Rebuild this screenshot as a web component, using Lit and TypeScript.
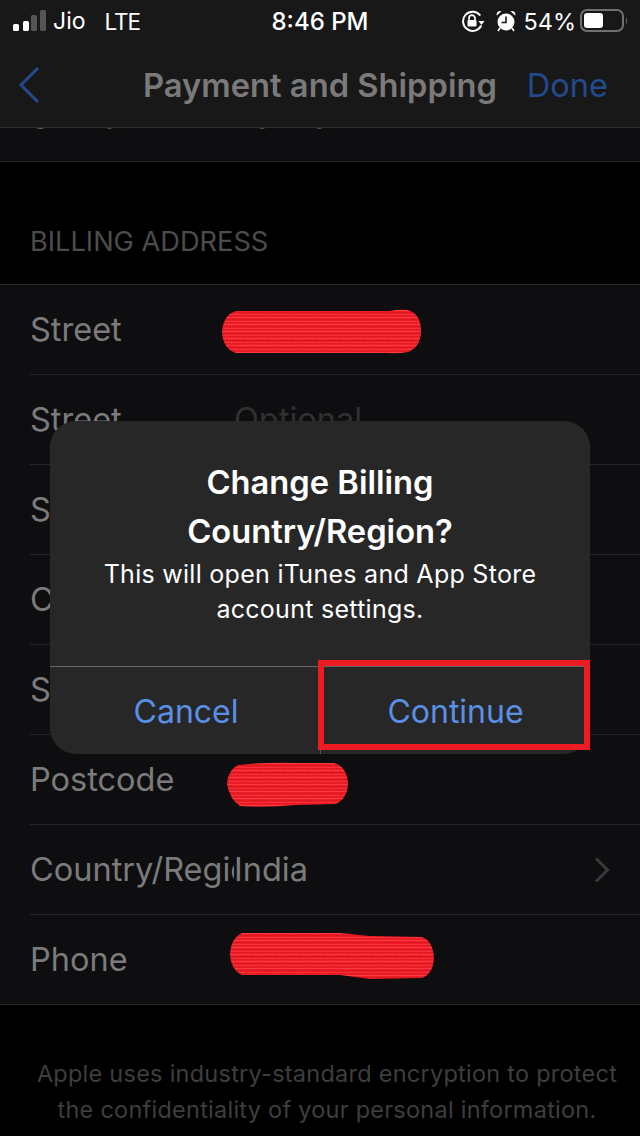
import { LitElement, html, css, svg } from 'lit'
import { customElement } from 'lit/decorators.js'

interface Scribble {
  left: number
  top: number
  width: number
  height: number
  d: string
}

interface Row {
  label: string
  value?: string
  muted?: boolean
  chevron?: boolean
  scribble?: Scribble
}

const ROWS: Row[] = [
  {
    label: 'Street',
    scribble: {
      left: 222, top: 24, width: 200, height: 46,
      d: 'M14 2 H168 Q176 0 186 1 Q199 5 199 22 Q199 38 186 43 Q176 45 166 44 H14 Q1 40 0 23 Q1 6 14 2 Z',
    },
  },
  { label: 'Street', value: 'Optional', muted: true },
  { label: 'Suburb' },
  { label: 'City' },
  { label: 'State' },
  {
    label: 'Postcode',
    scribble: {
      left: 226, top: 27, width: 124, height: 47,
      d: 'M12 3 Q40 0 70 1 L108 1 Q120 4 122 20 Q122 36 110 42 L70 43 Q40 46 14 44 Q4 38 1 22 Q2 8 12 3 Z',
    },
  },
  { label: 'Country/Region', value: 'India', chevron: true },
  {
    label: 'Phone',
    scribble: {
      left: 230, top: 17, width: 206, height: 48,
      d: 'M12 1 H110 L140 4 L192 5 Q203 9 204 26 Q203 42 192 46 L140 47 L110 43 H12 Q1 38 0 22 Q1 6 12 1 Z',
    },
  },
]

@customElement('app-root')
export class AppRoot extends LitElement {
  static styles = css`
    :host {
      display: block;
      position: relative;
      width: 640px;
      height: 1136px;
      overflow: hidden;
      background: #000;
      font-family: Inter, 'Liberation Sans', sans-serif;
    }

    .header {
      position: relative;
      z-index: 1;
      height: 128px;
      box-sizing: border-box;
      background: #181818;
      border-bottom: 1px solid #2c2c2c;
    }

    /* Status bar */
    .status {
      display: grid;
      grid-template-columns: 1fr auto 1fr;
      align-items: center;
      height: 42px;
      padding: 0 11px;
      color: #fff;
      font-size: 24px;
    }

    .status-left,
    .status-right {
      display: flex;
      align-items: center;
    }

    .status-left {
      padding-left: 2px;
    }

    .status-right {
      justify-content: flex-end;
    }

    .time {
      font-weight: 500;
    }

    .carrier {
      margin-left: 7px;
      font-size: 23px;
    }

    .network {
      margin-left: 19px;
      font-size: 22.5px;
      letter-spacing: -1px;
    }

    .percent {
      margin: 0 4px 0 7px;
      font-size: 23.5px;
    }

    .alarm {
      margin-left: 11px;
    }

    /* Navigation bar */
    .nav {
      display: grid;
      grid-template-columns: 1fr auto 1fr;
      align-items: center;
      height: 85px;
      padding: 0 18px;
    }

    .nav-title {
      color: #7a7a7a;
      font-size: 32.7px;
      font-weight: 600;
    }

    .nav-done {
      justify-self: end;
      margin-right: 14px;
      color: #234a8c;
      font-size: 32.6px;
    }

    /* Page behind the dialog */
    .scroll {
      height: 1008px;
      overflow: hidden;
    }

    .content {
      margin-top: -56px;
    }

    .group {
      background: #0e0e10;
      border-top: 1px solid #2a2a2c;
      border-bottom: 1px solid #2a2a2c;
    }

    .group.first {
      border-top: none;
    }

    .group.first .row {
      padding-bottom: 1px;
      height: 88px;
    }

    .row {
      position: relative;
      display: flex;
      align-items: center;
      height: 89px;
      margin-left: 30px;
      padding-right: 30px;
      font-size: 32.5px;
      color: #7b7b7b;
    }

    .row + .row {
      border-top: 1px solid #252527;
    }

    .label {
      flex: none;
      width: 204px;
      overflow: hidden;
      white-space: nowrap;
    }

    .value {
      flex: 1;
    }

    .value.muted {
      color: #303032;
    }

    .scribble {
      position: absolute;
    }

    .section-title {
      padding: 65px 30px 27px;
      color: #4c4c4c;
      font-size: 27.2px;
      line-height: 30px;
    }

    .footer {
      padding: 51px 20px 0 34px;
      color: #3e3e3e;
      font-size: 23.5px;
      line-height: 36px;
      letter-spacing: 0.25px;
      text-align: center;
    }

    /* Alert */
    .dialog {
      position: absolute;
      z-index: 2;
      left: 50px;
      top: 421px;
      width: 540px;
      height: 333px;
      display: flex;
      flex-direction: column;
      background: #272728;
      border-radius: 26px;
      color: #fff;
      text-align: center;
    }

    .dialog-text {
      flex: 1;
      padding: 37px 40px 0;
    }

    .dialog-title {
      font-size: 32.7px;
      font-weight: 600;
      line-height: 49px;
    }

    .dialog-body {
      margin-top: 1px;
      font-size: 25px;
      line-height: 35px;
      letter-spacing: 0.28px;
    }

    .actions {
      display: grid;
      grid-template-columns: 270px 270px;
      height: 87px;
      border-top: 1px solid #666;
    }

    .action {
      display: flex;
      align-items: center;
      justify-content: center;
      padding-top: 1px;
      color: #5b8fe6;
      font-size: 32px;
    }

    .action:first-child {
      padding-left: 2px;
    }

    .action + .action {
      border-left: 1px solid #555;
    }

    .highlight {
      position: absolute;
      left: 268px;
      top: 239px;
      width: 272px;
      height: 90px;
      box-sizing: border-box;
      border: 6px solid #ed1c24;
    }
  `

  private renderStatus() {
    return html`
      <div class="status">
        <div class="status-left">
          <svg width="33" height="22" viewBox="0 0 33 22">
            <rect x="0" y="14" width="6" height="7" rx="1.5" fill="#fff" />
            <rect x="10" y="11" width="6" height="10" rx="1.5" fill="#fff" />
            <rect x="18" y="5" width="6" height="16" rx="1.5" fill="#555" />
            <rect x="27" y="0" width="6" height="21" rx="1.5" fill="#555" />
          </svg>
          <span class="carrier">Jio</span>
          <span class="network">LTE</span>
        </div>
        <div class="time">8:46 PM</div>
        <div class="status-right">
          <svg width="24" height="22" viewBox="0 0 24 22">
            <path d="M19.3 5.5 A9.6 9.6 0 1 0 20.3 15.5" fill="none" stroke="#fff" stroke-width="2" />
            <path d="M17.5 11 H23.5 L20.5 15 Z" fill="#fff" />
            <path d="M8 10 V8.2 A3 3 0 0 1 14 8.2 V10" fill="none" stroke="#fff" stroke-width="1.7" />
            <rect x="6.5" y="10" width="9" height="6.5" rx="1" fill="#fff" />
          </svg>
          <svg class="alarm" width="20" height="22" viewBox="0 0 20 22">
            <circle cx="10" cy="12" r="8.5" fill="#fff" />
            <path d="M10 6.5 V12.5 H5.5" fill="none" stroke="#181818" stroke-width="1.6" />
            <path d="M0.8 5.5 A3.5 3.5 0 0 1 5.5 1.2 Z M19.2 5.5 A3.5 3.5 0 0 0 14.5 1.2 Z" fill="#fff" />
            <path d="M4 18 L2 21 M16 18 L18 21" stroke="#fff" stroke-width="1.6" />
          </svg>
          <span class="percent">54%</span>
          <svg width="49" height="24" viewBox="0 0 49 24">
            <rect x="1" y="1" width="42" height="21" rx="6" fill="none" stroke="#707070" stroke-width="2" />
            <rect x="4" y="4" width="19" height="15" rx="3" fill="#fff" />
            <path d="M46 8 Q48 11.5 46 16 Z" fill="#707070" />
          </svg>
        </div>
      </div>
    `
  }

  private renderScribble(s: Scribble, index: number) {
    const id = `scribble-${index}`
    return html`
      <svg
        class="scribble"
        style="left:${s.left - 30}px;top:${s.top}px"
        width=${s.width}
        height=${s.height}
        viewBox="0 0 ${s.width} ${s.height}"
      >
        ${svg`
          <defs>
            <pattern id=${id} width="3" height="7" patternUnits="userSpaceOnUse">
              <rect width="3" height="7" fill="#ee1c25" />
              <rect y="1" width="3" height="1" fill="#f93a44" />
              <rect x="1" y="3" width="2" height="1" fill="#d4161f" />
              <rect y="5" width="3" height="1" fill="#f5303a" />
              <rect x="2" y="6" width="1" height="1" fill="#cf151d" />
            </pattern>
          </defs>
          <path d=${s.d} fill="url(#${id})" />
        `}
      </svg>
    `
  }

  private renderRow(row: Row, index: number) {
    return html`
      <div class="row">
        <div class="label">${row.label}</div>
        <div class="value ${row.muted ? 'muted' : ''}">${row.value ?? ''}</div>
        ${row.chevron
          ? html`
              <svg width="16" height="26" viewBox="0 0 16 26">
                <path d="M2 1.5 L13.5 13 L2 24.5" fill="none" stroke="#3a3a3c" stroke-width="3" />
              </svg>
            `
          : ''}
        ${row.scribble ? this.renderScribble(row.scribble, index) : ''}
      </div>
    `
  }

  render() {
    return html`
      <div class="header">
        ${this.renderStatus()}
        <div class="nav">
          <svg width="22" height="38" viewBox="0 0 22 38">
            <path d="M20 2 L3 19 L20 36" fill="none" stroke="#234a8c" stroke-width="3" />
          </svg>
          <div class="nav-title">Payment and Shipping</div>
          <div class="nav-done">Done</div>
        </div>
      </div>

      <div class="scroll">
        <div class="content">
          <div class="group first">
            <div class="row">
              <div class="label">Surname</div>
              <div class="value">Panda</div>
            </div>
          </div>
          <div class="section-title">BILLING ADDRESS</div>
          <div class="group">
            ${ROWS.map((row, i) => this.renderRow(row, i))}
          </div>
          <div class="footer">
            Apple uses industry-standard encryption to protect<br />
            the confidentiality of your personal information.
          </div>
        </div>
      </div>

      <div class="dialog">
        <div class="dialog-text">
          <div class="dialog-title">Change Billing<br />Country/Region?</div>
          <div class="dialog-body">This will open iTunes and App Store<br />account settings.</div>
        </div>
        <div class="actions">
          <div class="action">Cancel</div>
          <div class="action">Continue</div>
        </div>
        <div class="highlight"></div>
      </div>
    `
  }
}

declare global {
  interface HTMLElementTagNameMap {
    'app-root': AppRoot
  }
}
